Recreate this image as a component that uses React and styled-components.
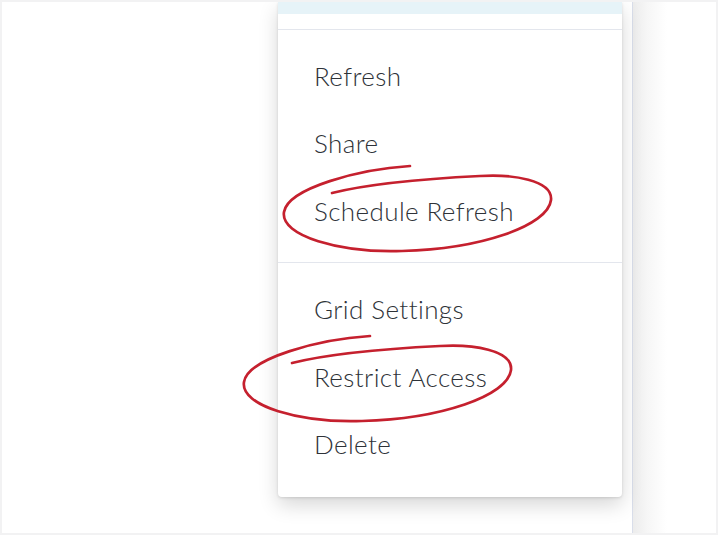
import React from "react";
import styled, { createGlobalStyle } from "styled-components";

const GlobalStyle = createGlobalStyle`
  html, body {
    margin: 0;
    padding: 0;
    background: #fff;
  }
  body {
    font-family: Lato, "Noto Sans", sans-serif;
  }
`;

const Frame = styled.div`
  width: 718px;
  height: 535px;
  box-sizing: border-box;
  border: 2px solid #f2f2f3;
  background: #fff;
  display: flex;
  overflow: hidden;
`;

const Main = styled.div`
  flex: 1;
  position: relative;
  padding-left: 276px;
  padding-right: 10px;
`;

const SidePanel = styled.div`
  width: 83px;
  border-left: 1px solid #d9deea;
  background: linear-gradient(to right, #ececec 0, #f6f6f6 14px, #fff 34px);
`;

const Menu = styled.div`
  position: relative;
  width: 344px;
  background: #fff;
  border-radius: 0 0 4px 4px;
  box-shadow: 0 8px 20px rgba(0, 0, 0, 0.16), 0 1px 3px rgba(0, 0, 0, 0.12);
`;

const Group = styled.div`
  padding: ${(p) => p.$pad};
  & + & {
    border-top: 1px solid #e3e6ed;
  }
`;

const Highlight = styled.div`
  height: 12px;
  background: #e6f3f8;
`;

const Item = styled.div`
  height: 67.5px;
  display: flex;
  align-items: center;
  padding-left: 36px;
  font-size: 26px;
  font-weight: 300;
  color: #2e3238;
  letter-spacing: 0.4px;
`;

const Scribble = styled.svg`
  position: absolute;
  left: ${(p) => p.$x}px;
  top: ${(p) => p.$y}px;
  overflow: visible;
  pointer-events: none;
  path {
    fill: none;
    stroke: #c5202e;
    stroke-width: 2.7;
    stroke-linecap: round;
  }
`;

const Circle = ({ x, y }) => (
  <Scribble $x={x} $y={y} width="280" height="92" viewBox="0 0 280 92">
    <path d="M130,2 C80,5 8,24 4,48 C0,72 60,89 122,87 C200,85 268,62 271,36 C273,16 232,10 200,12 C140,15 88,20 52,29" />
  </Scribble>
);

const groups = [
  { pad: "12px 0 17px", items: ["Refresh", "Share", "Schedule Refresh"] },
  { pad: "13px 0 19px", items: ["Grid Settings", "Restrict Access", "Delete"] },
];

export default function App() {
  return (
    <>
      <GlobalStyle />
      <Frame>
        <Main>
          <Menu>
            <Group $pad="0 0 15px">
              <Highlight />
            </Group>
            {groups.map((g, i) => (
              <Group key={i} $pad={g.pad}>
                {g.items.map((label) => (
                  <Item key={label}>{label}</Item>
                ))}
              </Group>
            ))}
          </Menu>
          <Circle x={278} y={162} />
          <Circle x={238} y={332} />
        </Main>
        <SidePanel />
      </Frame>
    </>
  );
}
